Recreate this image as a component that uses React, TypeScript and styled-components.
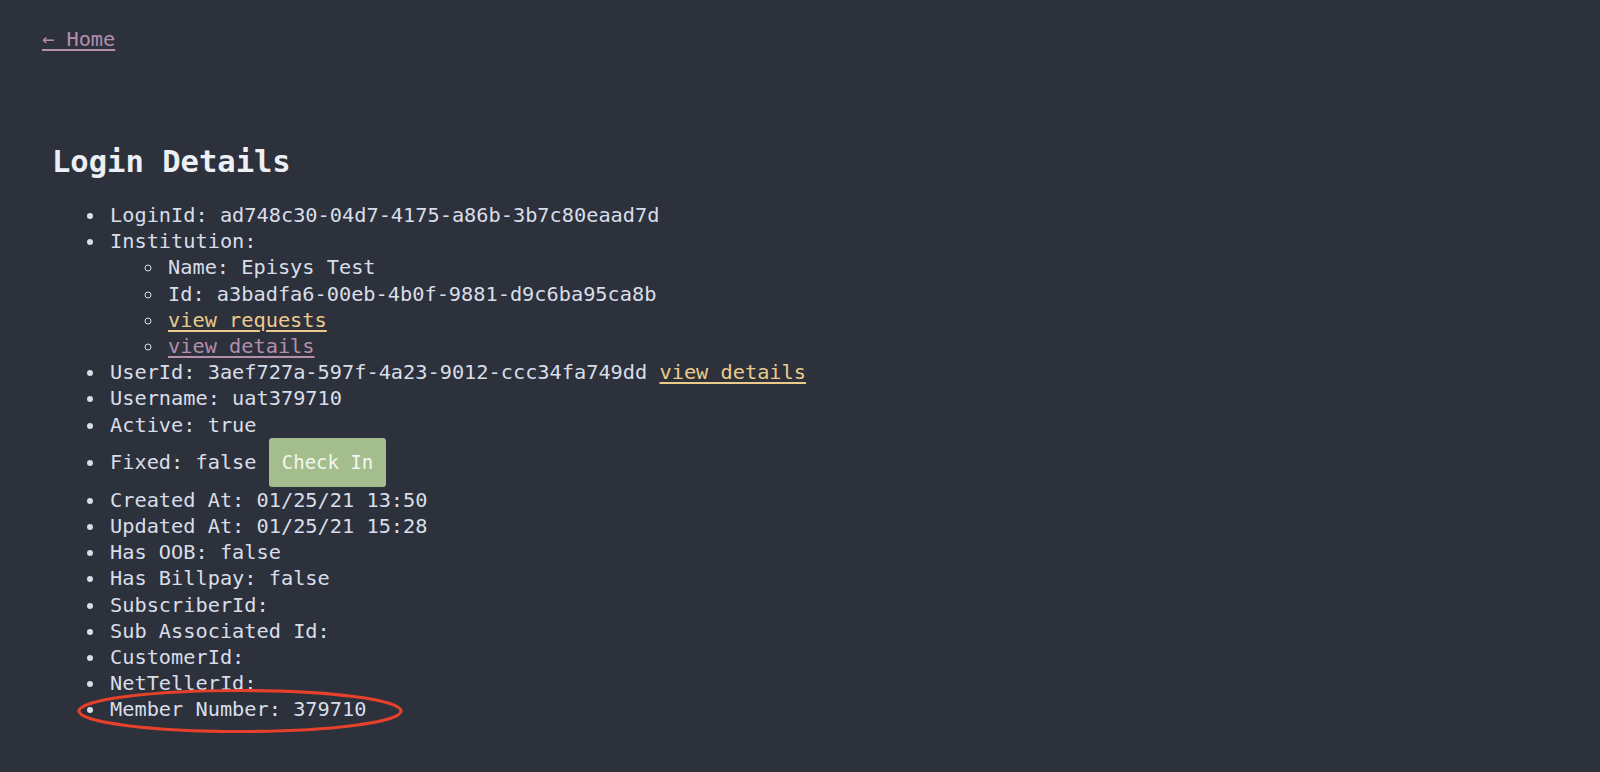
import React from "react";
import styled, { createGlobalStyle } from "styled-components";

const GlobalStyle = createGlobalStyle`
  html, body {
    margin: 0;
    padding: 0;
    background: #2d313c;
  }
  body {
    min-height: 772px;
    font-family: "DejaVu Sans Mono", "Liberation Mono", monospace;
    color: #d8dee9;
  }
`;

const Page = styled.div`
  position: relative;
  min-height: 772px;
  background: #2d313c;
  overflow: hidden;
`;

const Nav = styled.nav`
  padding: 27px 0 0 42px;
  line-height: 24px;
`;

const HomeLink = styled.a`
  font-family: "DejaVu Sans Mono", "Liberation Mono", monospace;
  font-size: 20.3px;
  line-height: 24px;
  color: #b48ead;
  text-decoration: underline;
  text-underline-offset: 3px;
`;

const Main = styled.main`
  margin-top: 91px;
  padding-left: 52px;
`;

const Title = styled.h1`
  margin: 0;
  font-size: 30.5px;
  line-height: 36px;
  font-weight: bold;
  color: #eceff4;
`;

const List = styled.ul<{ $nested?: boolean }>`
  margin: ${(p) => (p.$nested ? "0" : "22px 0 0 0")};
  padding-left: 54px;
  list-style: ${(p) => (p.$nested ? "circle" : "disc")};
  font-size: 20.3px;
  line-height: 26.2px;
`;

const Item = styled.li`
  padding-left: 4px;
`;

const Link = styled.a<{ $visited?: boolean }>`
  color: ${(p) => (p.$visited ? "#b48ead" : "#ebcb8b")};
  text-decoration: underline;
  text-underline-offset: 3px;
  cursor: pointer;
`;

const Button = styled.button`
  font-family: "DejaVu Sans Mono", "Liberation Mono", monospace;
  font-size: 19px;
  line-height: 25px;
  padding: 12px 13px;
  border: none;
  border-radius: 3px;
  background: #a3be8c;
  color: #f4f6f0;
  cursor: pointer;
`;

const Annotation = styled.svg`
  position: absolute;
  left: 74px;
  top: 686px;
  width: 332px;
  height: 50px;
  pointer-events: none;
`;

export default function App() {
  return (
    <Page>
      <GlobalStyle />
      <Nav>
        <HomeLink href="#">← Home</HomeLink>
      </Nav>
      <Main>
        <Title>Login Details</Title>
        <List>
          <Item>LoginId: ad748c30-04d7-4175-a86b-3b7c80eaad7d</Item>
          <Item>
            Institution:
            <List $nested>
              <Item>Name: Episys Test</Item>
              <Item>Id: a3badfa6-00eb-4b0f-9881-d9c6ba95ca8b</Item>
              <Item>
                <Link>view requests</Link>
              </Item>
              <Item>
                <Link $visited>view details</Link>
              </Item>
            </List>
          </Item>
          <Item>
            UserId: 3aef727a-597f-4a23-9012-ccc34fa749dd <Link>view details</Link>
          </Item>
          <Item>Username: uat379710</Item>
          <Item>Active: true</Item>
          <Item>
            Fixed: false <Button>Check In</Button>
          </Item>
          <Item>Created At: 01/25/21 13:50</Item>
          <Item>Updated At: 01/25/21 15:28</Item>
          <Item>Has OOB: false</Item>
          <Item>Has Billpay: false</Item>
          <Item>SubscriberId:</Item>
          <Item>Sub Associated Id:</Item>
          <Item>CustomerId:</Item>
          <Item>NetTellerId:</Item>
          <Item>Member Number: 379710</Item>
        </List>
      </Main>
      <Annotation viewBox="0 0 332 50">
        <ellipse cx="166" cy="25" rx="161" ry="20.5" fill="none" stroke="#e5412b" strokeWidth="3.2" />
      </Annotation>
    </Page>
  );
}
